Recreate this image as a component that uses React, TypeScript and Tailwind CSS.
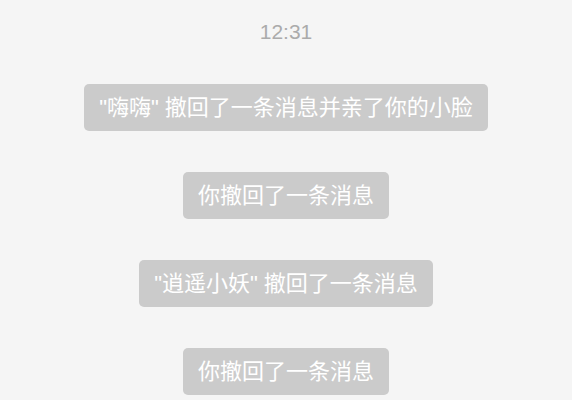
export default function App() {
  const notices = [
    '"嗨嗨" 撤回了一条消息并亲了你的小脸',
    "你撤回了一条消息",
    '"逍遥小妖" 撤回了一条消息',
    "你撤回了一条消息",
  ];
  return (
    <div
      className="w-[572px] h-[400px] overflow-hidden bg-[#f5f5f5] flex flex-col items-center"
      style={{ fontFamily: '"Liberation Sans", "Noto Sans CJK SC", sans-serif' }}
    >
      <div className="mt-[19px] text-[21px] leading-[26px] text-[#ababab]">12:31</div>
      <div className="mt-[39px] flex flex-col items-center gap-[41px]">
        {notices.map((t, i) => (
          <div
            key={i}
            className="h-[47px] px-[15px] flex items-center rounded-[5px] bg-[#cbcbcb] text-white text-[22px] whitespace-nowrap"
          >
            {t}
          </div>
        ))}
      </div>
    </div>
  );
}
